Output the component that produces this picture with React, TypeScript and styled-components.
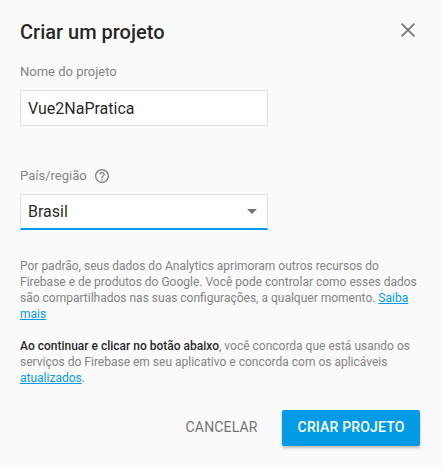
import React from 'react';
import styled, { createGlobalStyle } from 'styled-components';

const GlobalStyle = createGlobalStyle`
  *, *::before, *::after { box-sizing: border-box; }
  body { margin: 0; background: #fafafa; font-family: Roboto, sans-serif; }
`;

const Dialog = styled.form`
  width: 442px;
  height: 468px;
  padding: 20px 22px 22px 20px;
  display: flex;
  flex-direction: column;
  background: #fafafa;
  overflow: hidden;
`;

const Header = styled.header`
  display: flex;
  justify-content: space-between;
  height: 44px;
`;

const Title = styled.h1`
  margin: 0;
  font-size: 20px;
  line-height: 24px;
  font-weight: 500;
  color: rgba(0, 0, 0, 0.87);
`;

const CloseButton = styled.button`
  width: 24px;
  height: 24px;
  margin: -2px 0 0;
  padding: 0;
  border: 0;
  background: none;
  color: #757575;
  svg { display: block; }
`;

const Label = styled.label`
  display: flex;
  align-items: center;
  gap: 8px;
  height: 16px;
  font-size: 13px;
  line-height: 16px;
  color: #848484;
  svg { display: block; }
`;

const Field = styled.div<{ $active?: boolean }>`
  display: flex;
  align-items: center;
  justify-content: space-between;
  width: 248px;
  height: 36px;
  margin-top: 10px;
  padding: 0 10px 0 7px;
  border: 1px solid #e0e0e0;
  ${p => p.$active && 'border-bottom: 2px solid #039be5;'}
  background: #fff;
  font-size: 16px;
  line-height: 20px;
  color: rgba(0, 0, 0, 0.87);
`;

const FieldText = styled.span<{ $drop?: boolean }>`
  padding-top: ${p => (p.$drop ? '1px' : '2px')};
`;

const FieldGroup = styled.section<{ $gap: number }>`
  margin-bottom: ${p => p.$gap}px;
`;

const Note = styled.p`
  margin: 0 0 16px;
  font-size: 12px;
  line-height: 16px;
  color: #848484;
  white-space: nowrap;
`;

const Strong = styled.strong`
  font-weight: 500;
  color: rgba(0, 0, 0, 0.87);
`;

const Link = styled.a`
  color: #039be5;
  text-decoration: underline;
`;

const Actions = styled.footer`
  display: flex;
  justify-content: flex-end;
  gap: 8px;
  margin-top: 8px;
`;

const Button = styled.button<{ $primary?: boolean }>`
  height: 36px;
  padding: 0 ${p => (p.$primary ? '15.5px' : '16.5px')} 2px;
  border: 0;
  border-radius: 2px;
  font: ${p => (p.$primary ? 500 : 400)} 14px/34px Roboto, sans-serif;
  letter-spacing: 0.16px;
  white-space: nowrap;
  color: ${p => (p.$primary ? '#fff' : '#757575')};
  background: ${p => (p.$primary ? '#039be5' : 'transparent')};
  box-shadow: ${p => (p.$primary ? '0 2px 3px rgba(0, 0, 0, 0.26)' : 'none')};
`;

export default function App() {
  return (
    <>
      <GlobalStyle />
      <Dialog onSubmit={e => e.preventDefault()}>
        <Header>
          <Title>Criar um projeto</Title>
          <CloseButton type="button" aria-label="Fechar">
            <svg width="24" height="24" viewBox="0 0 24 24" fill="none" stroke="currentColor" strokeWidth="1.7">
              <path d="M5.6 5.6 18.4 18.4M18.4 5.6 5.6 18.4" />
            </svg>
          </CloseButton>
        </Header>
        <FieldGroup $gap={42}>
          <Label>Nome do projeto</Label>
          <Field>
            <FieldText>Vue2NaPratica</FieldText>
          </Field>
        </FieldGroup>
        <FieldGroup $gap={28}>
          <Label>
            País/região
            <svg width="14" height="14" viewBox="2 2 20 20" fill="#858585">
              <path d="M11 18h2v-2h-2v2zm1-16C6.48 2 2 6.48 2 12s4.48 10 10 10 10-4.48 10-10S17.52 2 12 2zm0 18c-4.41 0-8-3.59-8-8s3.59-8 8-8 8 3.59 8 8-3.59 8-8 8zm0-14c-2.21 0-4 1.79-4 4h2c0-1.1.9-2 2-2s2 .9 2 2c0 2-3 1.75-3 5h2c0-2.25 3-2.5 3-5 0-2.21-1.79-4-4-4z" />
            </svg>
          </Label>
          <Field $active>
            <FieldText $drop>Brasil</FieldText>
            <svg width="10" height="5" viewBox="0 0 10 5" fill="#757575">
              <path d="M0 0h10L5 5z" />
            </svg>
          </Field>
        </FieldGroup>
        <Note>
          Por padrão, seus dados do Analytics aprimoram outros recursos do<br />
          Firebase e de produtos do Google. Você pode controlar como esses dados<br />
          são compartilhados nas suas configurações, a qualquer momento. <Link>Saiba<br />mais</Link>
        </Note>
        <Note>
          <Strong>Ao continuar e clicar no botão abaixo</Strong>, você concorda que está usando os<br />
          serviços do Firebase em seu aplicativo e concorda com os aplicáveis<br />
          <Link>atualizados</Link>.
        </Note>
        <Actions>
          <Button type="button">CANCELAR</Button>
          <Button $primary type="submit">CRIAR PROJETO</Button>
        </Actions>
      </Dialog>
    </>
  );
}
